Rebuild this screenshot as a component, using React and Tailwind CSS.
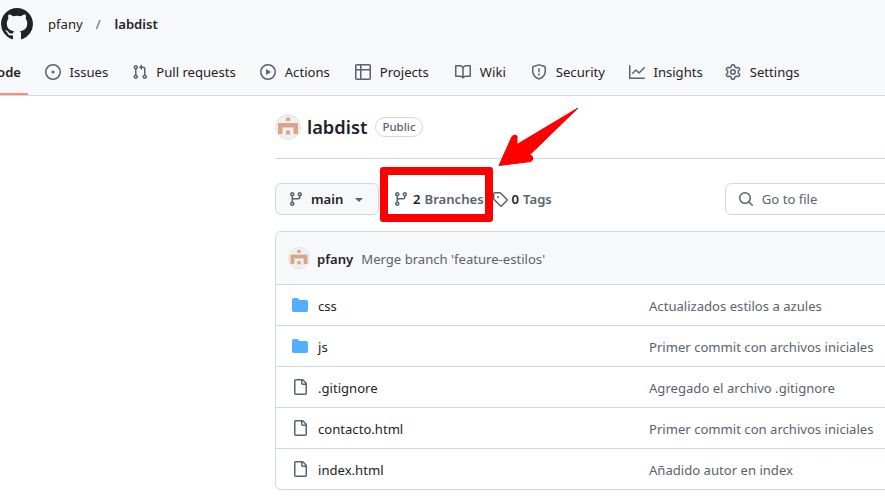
const paths = {
  issue: "M8 9.5a1.5 1.5 0 1 0 0-3 1.5 1.5 0 0 0 0 3Z M8 0a8 8 0 1 1 0 16A8 8 0 0 1 8 0ZM1.5 8a6.5 6.5 0 1 0 13 0 6.5 6.5 0 0 0-13 0Z",
  pull: "M1.5 3.25a2.25 2.25 0 1 1 3 2.122v5.256a2.251 2.251 0 1 1-1.5 0V5.372A2.25 2.25 0 0 1 1.5 3.25Zm5.677-.177L9.573.677A.25.25 0 0 1 10 .854V2.5h1A2.5 2.5 0 0 1 13.5 5v5.628a2.251 2.251 0 1 1-1.5 0V5a1 1 0 0 0-1-1h-1v1.646a.25.25 0 0 1-.427.177L7.177 3.427a.25.25 0 0 1 0-.354ZM3.75 2.5a.75.75 0 1 0 0 1.5.75.75 0 0 0 0-1.5Zm0 9.5a.75.75 0 1 0 0 1.5.75.75 0 0 0 0-1.5Zm8.25.75a.75.75 0 1 0 1.5 0 .75.75 0 0 0-1.5 0Z",
  play: "M8 0a8 8 0 1 1 0 16A8 8 0 0 1 8 0ZM1.5 8a6.5 6.5 0 1 0 13 0 6.5 6.5 0 0 0-13 0Zm4.879-2.773 4.264 2.559a.25.25 0 0 1 0 .428l-4.264 2.559A.25.25 0 0 1 6 10.559V5.442a.25.25 0 0 1 .379-.215Z",
  table: "M0 1.75C0 .784.784 0 1.75 0h12.5C15.216 0 16 .784 16 1.75v12.5A1.75 1.75 0 0 1 14.25 16H1.75A1.75 1.75 0 0 1 0 14.25ZM6.5 6.5v8h7.75a.25.25 0 0 0 .25-.25V6.5Zm8-1.5V1.75a.25.25 0 0 0-.25-.25H6.5V5Zm-13 1.5v7.75c0 .138.112.25.25.25H5v-8ZM5 5V1.5H1.75a.25.25 0 0 0-.25.25V5Z",
  book: "M0 1.75A.75.75 0 0 1 .75 1h4.253c1.227 0 2.317.59 3 1.501A3.743 3.743 0 0 1 11.006 1h4.245a.75.75 0 0 1 .75.75v10.5a.75.75 0 0 1-.75.75h-4.507a2.25 2.25 0 0 0-1.591.659l-.622.621a.75.75 0 0 1-1.06 0l-.622-.621A2.25 2.25 0 0 0 5.258 13H.75a.75.75 0 0 1-.75-.75Zm7.251 10.324.004-5.073-.002-2.253A2.25 2.25 0 0 0 5.003 2.5H1.5v9h3.757a3.75 3.75 0 0 1 1.994.574ZM8.755 4.75l-.004 7.322a3.752 3.752 0 0 1 1.992-.572H14.5v-9h-3.495a2.25 2.25 0 0 0-2.25 2.25Z",
  shield: "M7.467.133a1.748 1.748 0 0 1 1.066 0l5.25 1.68A1.75 1.75 0 0 1 15 3.48V7c0 1.566-.32 3.182-1.303 4.682-.983 1.498-2.585 2.813-5.032 3.855a1.697 1.697 0 0 1-1.33 0c-2.447-1.042-4.049-2.357-5.032-3.855C1.32 10.182 1 8.566 1 7V3.48a1.75 1.75 0 0 1 1.217-1.667Zm.61 1.429a.25.25 0 0 0-.153 0l-5.25 1.68a.25.25 0 0 0-.174.238V7c0 1.358.275 2.666 1.057 3.86.784 1.194 2.121 2.34 4.366 3.297a.196.196 0 0 0 .154 0c2.245-.956 3.582-2.104 4.366-3.298C13.225 9.666 13.5 8.36 13.5 7V3.48a.251.251 0 0 0-.174-.237l-5.25-1.68ZM8.75 4.75v3a.75.75 0 0 1-1.5 0v-3a.75.75 0 0 1 1.5 0ZM9 10.5a1 1 0 1 1-2 0 1 1 0 0 1 2 0Z",
  graph: "M1.5 1.75V13.5h13.75a.75.75 0 0 1 0 1.5H.75a.75.75 0 0 1-.75-.75V1.75a.75.75 0 0 1 1.5 0Zm14.28 2.53-5.25 5.25a.75.75 0 0 1-1.06 0L7 7.06 4.28 9.78a.751.751 0 0 1-1.042-.018.751.751 0 0 1-.018-1.042l3.25-3.25a.75.75 0 0 1 1.06 0L10 7.94l4.72-4.72a.751.751 0 0 1 1.042.018.751.751 0 0 1 .018 1.042Z",
  gear: "M8 0a8.2 8.2 0 0 1 .701.031C9.444.095 9.99.645 10.16 1.29l.288 1.107c.018.066.079.158.212.224.231.114.454.243.668.386.123.082.233.09.299.071l1.103-.303c.644-.176 1.392.021 1.82.63.27.385.506.792.704 1.218.315.675.111 1.422-.364 1.891l-.814.806c-.049.048-.098.147-.088.294.016.257.016.515 0 .772-.01.147.038.246.088.294l.814.806c.475.469.679 1.216.364 1.891a7.977 7.977 0 0 1-.704 1.217c-.428.61-1.176.807-1.82.63l-1.102-.302c-.067-.019-.177-.011-.3.071a5.909 5.909 0 0 1-.668.386c-.133.066-.194.158-.211.224l-.29 1.106c-.168.646-.715 1.196-1.458 1.26a8.006 8.006 0 0 1-1.402 0c-.743-.064-1.289-.614-1.458-1.26l-.289-1.106c-.018-.066-.079-.158-.212-.224a5.738 5.738 0 0 1-.668-.386c-.123-.082-.233-.09-.299-.071l-1.103.303c-.644.176-1.392-.021-1.82-.63a8.12 8.12 0 0 1-.704-1.218c-.315-.675-.111-1.422.363-1.891l.815-.806c.05-.048.098-.147.088-.294a6.214 6.214 0 0 1 0-.772c.01-.147-.038-.246-.088-.294l-.815-.806C.635 6.045.431 5.298.746 4.623a7.92 7.92 0 0 1 .704-1.217c.428-.61 1.176-.807 1.82-.63l1.102.302c.067.019.177.011.3-.071.214-.143.437-.272.668-.386.133-.066.194-.158.211-.224l.29-1.106C6.009.645 6.556.095 7.299.03 7.53.01 7.764 0 8 0Zm-.571 1.525c-.036.003-.108.036-.137.146l-.289 1.105c-.147.561-.549.967-.998 1.189-.173.086-.34.183-.5.29-.417.278-.97.423-1.529.27l-1.103-.303c-.109-.03-.175.016-.195.045-.22.312-.412.644-.573.99-.014.031-.021.11.059.19l.815.806c.411.406.562.957.53 1.456a4.709 4.709 0 0 0 0 .582c.032.499-.119 1.05-.53 1.456l-.815.806c-.081.08-.073.159-.059.19.162.346.353.677.573.989.02.03.085.076.195.046l1.102-.303c.56-.153 1.113-.008 1.53.27.161.107.328.204.501.29.447.222.85.629.997 1.189l.289 1.105c.029.109.101.143.137.146a6.6 6.6 0 0 0 1.142 0c.036-.003.108-.036.137-.146l.289-1.105c.147-.561.549-.967.998-1.189.173-.086.34-.183.5-.29.417-.278.97-.423 1.529-.27l1.103.303c.109.029.175-.016.195-.045.22-.313.411-.644.573-.99.014-.031.021-.11-.059-.19l-.815-.806c-.411-.406-.562-.957-.53-1.456a4.709 4.709 0 0 0 0-.582c-.032-.499.119-1.05.53-1.456l.815-.806c.081-.08.073-.159.059-.19a6.464 6.464 0 0 0-.573-.989c-.02-.03-.085-.076-.195-.046l-1.102.303c-.56.153-1.113.008-1.53-.27a4.44 4.44 0 0 0-.501-.29c-.447-.222-.85-.629-.997-1.189l-.289-1.105c-.029-.11-.101-.143-.137-.146a6.6 6.6 0 0 0-1.142 0ZM11 8a3 3 0 1 1-6 0 3 3 0 0 1 6 0ZM9.5 8a1.5 1.5 0 1 0-3.001.001A1.5 1.5 0 0 0 9.5 8Z",
  branch: "M9.5 3.25a2.25 2.25 0 1 1 3 2.122V6A2.5 2.5 0 0 1 10 8.5H6a1 1 0 0 0-1 1v1.128a2.251 2.251 0 1 1-1.5 0V5.372a2.25 2.25 0 1 1 1.5 0v1.836A2.493 2.493 0 0 1 6 7h4a1 1 0 0 0 1-1v-.628A2.25 2.25 0 0 1 9.5 3.25Zm-6 0a.75.75 0 1 0 1.5 0 .75.75 0 0 0-1.5 0Zm8.25-.75a.75.75 0 1 0 0 1.5.75.75 0 0 0 0-1.5ZM4.25 12a.75.75 0 1 0 0 1.5.75.75 0 0 0 0-1.5Z",
  tag: "M1 7.775V2.75C1 1.784 1.784 1 2.75 1h5.025c.464 0 .91.184 1.238.513l6.25 6.25a1.75 1.75 0 0 1 0 2.474l-5.026 5.026a1.75 1.75 0 0 1-2.474 0l-6.25-6.25A1.752 1.752 0 0 1 1 7.775Zm1.5 0c0 .066.026.13.073.177l6.25 6.25a.25.25 0 0 0 .354 0l5.025-5.025a.25.25 0 0 0 0-.354l-6.25-6.25a.25.25 0 0 0-.177-.073H2.75a.25.25 0 0 0-.25.25ZM6 5a1 1 0 1 1 0 2 1 1 0 0 1 0-2Z",
  search: "M10.68 11.74a6 6 0 0 1-7.922-8.982 6 6 0 0 1 8.982 7.922l3.04 3.04a.749.749 0 0 1-.326 1.275.749.749 0 0 1-.734-.215ZM11.5 7a4.499 4.499 0 1 0-8.997 0A4.499 4.499 0 0 0 11.5 7Z",
  file: "M2 1.75C2 .784 2.784 0 3.75 0h6.586c.464 0 .909.184 1.237.513l2.914 2.914c.329.328.513.773.513 1.237v9.586A1.75 1.75 0 0 1 13.25 16h-9.5A1.75 1.75 0 0 1 2 14.25Zm1.75-.25a.25.25 0 0 0-.25.25v12.5c0 .138.112.25.25.25h9.5a.25.25 0 0 0 .25-.25V6h-2.75A1.75 1.75 0 0 1 9 4.25V1.5Zm6.75.062V4.25c0 .138.112.25.25.25h2.688l-.011-.013-2.914-2.914-.013-.011Z",
  folder: "M1.75 1A1.75 1.75 0 0 0 0 2.75v10.5C0 14.216.784 15 1.75 15h12.5A1.75 1.75 0 0 0 16 13.25v-8.5A1.75 1.75 0 0 0 14.25 3H7.5a.25.25 0 0 1-.2-.1l-.9-1.2C6.07 1.26 5.55 1 5 1H1.75Z",
  caret: "m4.427 7.427 3.396 3.396a.25.25 0 0 0 .354 0l3.396-3.396A.25.25 0 0 0 11.396 7H4.604a.25.25 0 0 0-.177.427Z",
  github: "M8 0c4.42 0 8 3.58 8 8a8.013 8.013 0 0 1-5.45 7.59c-.4.08-.55-.17-.55-.38 0-.27.01-1.13.01-2.2 0-.75-.25-1.23-.54-1.48 1.78-.2 3.65-.88 3.65-3.95 0-.88-.31-1.59-.82-2.15.08-.2.36-1.02-.08-2.12 0 0-.67-.22-2.2.82-.64-.18-1.32-.27-2-.27-.68 0-1.36.09-2 .27-1.53-1.03-2.2-.82-2.2-.82-.44 1.1-.16 1.92-.08 2.12-.51.56-.82 1.28-.82 2.15 0 3.06 1.86 3.75 3.64 3.95-.23.2-.44.55-.51 1.07-.46.21-1.61.55-2.33-.66-.15-.24-.6-.83-1.23-.82-.67.01-.27.38.01.53.34.19.73.9.82 1.13.16.45.68 1.31 2.69.94 0 .67.01 1.3.01 1.49 0 .21-.15.45-.55.38A7.995 7.995 0 0 1 0 8c0-4.42 3.58-8 8-8Z",
};

const tabs = [
  { label: "Issues", icon: "issue", ml: "ml-[17px]" },
  { label: "Pull requests", icon: "pull", ml: "ml-[23.5px]" },
  { label: "Actions", icon: "play", ml: "ml-[24.5px]" },
  { label: "Projects", icon: "table", ml: "ml-[25.5px]" },
  { label: "Wiki", icon: "book", ml: "ml-[26.5px]" },
  { label: "Security", icon: "shield", ml: "ml-[25.5px]" },
  { label: "Insights", icon: "graph", ml: "ml-[24px]" },
  { label: "Settings", icon: "gear", ml: "ml-[22.5px]" },
];

const files = [
  { name: "css", dir: true, msg: "Actualizados estilos a azules" },
  { name: "js", dir: true, msg: "Primer commit con archivos iniciales" },
  { name: ".gitignore", msg: "Agregado el archivo .gitignore" },
  { name: "contacto.html", msg: "Primer commit con archivos iniciales" },
  { name: "index.html", msg: "Añadido autor en index" },
];

function Icon({ name, size = 16, className = "text-[#59636e]" }) {
  return (
    <svg width={size} height={size} viewBox="0 0 16 16" fill="currentColor" fillRule="evenodd" className={`shrink-0 ${className}`}>
      <path d={paths[name]} />
    </svg>
  );
}

function Avatar({ size }) {
  return (
    <svg width={size} height={size} viewBox="0 0 26 26" className="shrink-0">
      <circle cx="13" cy="13" r="12.5" fill="#f0f0f0" stroke="#dfe3e8" />
      <rect x="11" y="3.5" width="4" height="3.5" fill="#d9a48a" />
      <rect x="3" y="9" width="20" height="4.5" fill="#d9a48a" />
      <rect x="3" y="13" width="4.5" height="7" fill="#d9a48a" />
      <rect x="18.5" y="13" width="4.5" height="7" fill="#d9a48a" />
      <rect x="11" y="16.5" width="4" height="4" fill="#d9a48a" />
    </svg>
  );
}

export default function App() {
  return (
    <div className="relative h-[504px] w-[885px] overflow-hidden bg-white font-['Noto_Sans','Open_Sans',sans-serif] text-[13.1px] text-[#1f2328]">
      <header className="h-[96px] border-b border-[#d1d9e0] bg-[#f6f8fa]">
        <div className="flex h-[48px] items-center pl-[1px]">
          <Icon name="github" size={32} className="text-[#1f2328]" />
          <span className="ml-[15px] pt-[2px]">pfany</span>
          <span className="ml-[13px] pt-[2px] text-[#59636e]">/</span>
          <span className="ml-[14px] pt-[2px] font-semibold">labdist</span>
        </div>
        <nav className="flex h-[47px] items-start">
          <div className="relative -ml-[20px] h-[47px] w-[48px] pt-[14px] font-semibold">
            <span className="block pr-[7px] text-right leading-[20px]">Code</span>
            <span className="absolute bottom-0 left-0 h-[2px] w-full bg-[#fd8c73]" />
          </div>
          {tabs.map((t) => (
            <div key={t.label} className={`flex items-center gap-[8.5px] pt-[14px] leading-[20px] ${t.ml}`}>
              <Icon name={t.icon} />
              <span>{t.label}</span>
            </div>
          ))}
        </nav>
      </header>

      <main className="ml-[275px] w-[680px]">
        <div className="flex h-[63px] items-center border-b border-[#d1d9e0] pb-[1px]">
          <Avatar size={26} />
          <span className="ml-[6px] text-[18.3px] font-semibold">labdist</span>
          <span className="ml-[8px] rounded-full border border-[#d1d9e0] px-[6px] text-[11.5px] font-medium leading-[18px] text-[#59636e]">
            Public
          </span>
        </div>

        <div className="mt-[24px] flex h-[32px] items-center">
          <button className="flex h-[32px] w-[104px] items-center rounded-md border border-[#d1d9e0] bg-[#f6f8fa] pl-[12px] font-semibold">
            <Icon name="branch" />
            <span className="ml-[7px] pt-[2px]">main</span>
            <Icon name="caret" className="ml-[8px] text-[#59636e]" />
          </button>
          <div className="ml-[14px] flex items-center">
            <Icon name="branch" />
            <span className="ml-[4px] pt-[2px] font-semibold">2</span>
            <span className="ml-[4px] pt-[2px] font-semibold text-[#59636e]">Branches</span>
          </div>
          <div className="ml-[8px] flex items-center">
            <Icon name="tag" />
            <span className="ml-[4px] pt-[2px] font-semibold">0</span>
            <span className="ml-[4px] pt-[2px] font-semibold text-[#59636e]">Tags</span>
          </div>
          <div className="ml-[173px] flex h-[32px] flex-1 items-center rounded-md border border-[#d1d9e0] pl-[12px] text-[#59636e]">
            <Icon name="search" />
            <span className="ml-[8px] pt-[2px]">Go to file</span>
          </div>
        </div>

        <div className="mt-[16px] overflow-hidden rounded-md border border-[#d1d9e0]">
          <div className="flex h-[52px] items-center bg-[#f6f8fa] pl-[12px]">
            <Avatar size={22} />
            <span className="ml-[7px] pt-[4px] font-semibold">pfany</span>
            <span className="ml-[8px] pt-[4px] text-[#59636e]">Merge branch 'feature-estilos'</span>
          </div>
          {files.map((f) => (
            <div key={f.name} className="flex h-[41px] items-center border-t border-[#d1d9e0] pl-[16px]">
              {f.dir ? <Icon name="folder" className="text-[#54aeff]" /> : <Icon name="file" />}
              <span className="ml-[10px] w-[331px] pt-[4px]">{f.name}</span>
              <span className="pt-[4px] text-[#59636e]">{f.msg}</span>
            </div>
          ))}
        </div>
      </main>

      {/* red callout drawn over the screenshot */}
      <div className="absolute left-[380px] top-[167px] h-[55px] w-[113px] rounded-[3px] border-[8px] border-[#ff0000]" />
      <svg className="absolute left-[495px] top-[105px]" width="90" height="65" viewBox="0 0 90 65">
        <path
          d="M83 3 L34.5 50 L37 51 Q39.5 54 36 56.5 L4 60.5 L17 31.5 Q19.5 29 22 31 L22 39.5 Z"
          fill="#ff0000"
          stroke="#ff0000"
          strokeLinejoin="round"
        />
      </svg>
    </div>
  );
}
